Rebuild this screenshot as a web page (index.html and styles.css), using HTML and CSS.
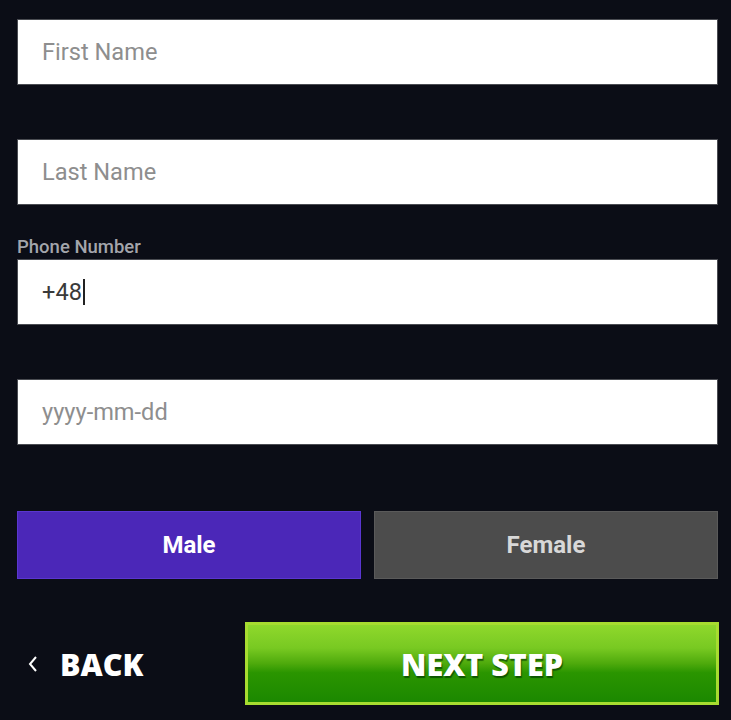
FILE: index.html
```html
<!DOCTYPE html>
<html>
<head>
<meta charset="utf-8">
<link rel="stylesheet" href="styles.css">
</head>
<body>
<div class="form">
  <div class="field">
    <div class="input"><span class="ph">First Name</span></div>
  </div>
  <div class="field">
    <div class="input"><span class="ph">Last Name</span></div>
  </div>
  <div class="field">
    <div class="label">Phone Number</div>
    <div class="input"><span class="val">+48</span><span class="caret"></span></div>
  </div>
  <div class="field">
    <div class="input"><span class="ph">yyyy-mm-dd</span></div>
  </div>
  <div class="gender">
    <div class="gbtn male">Male</div>
    <div class="gbtn female">Female</div>
  </div>
  <div class="actions">
    <div class="back">
      <svg class="chev" width="12" height="18" viewBox="0 0 12 18"><path d="M9 2 L3 9 L9 16" fill="none" stroke="#fff" stroke-width="2"/></svg>
      <span>BACK</span>
    </div>
    <div class="next">NEXT STEP</div>
  </div>
</div>
</body>
</html>
```
FILE: styles.css
```css
html, body {
  margin: 0;
  padding: 0;
  background: #0b0d16;
  height: 100%;
}
body {
  font-family: Roboto, "Liberation Sans", sans-serif;
}
.form {
  padding: 19px 13px 0 17px;
  display: flex;
  flex-direction: column;
}
.field {
  display: flex;
  flex-direction: column;
  height: 66px;
  justify-content: flex-end;
  margin-bottom: 54px;
}
.label {
  color: #a3a5ab;
  font-size: 18.5px;
  font-weight: 500;
  margin-top: -24px;
  height: 24px;
  line-height: 24px;
}
.input {
  box-sizing: border-box;
  height: 66px;
  flex: none;
  background: #fff;
  border: 1px solid #4a4c52;
  display: flex;
  align-items: center;
  padding-left: 24px;
  font-size: 23.6px;
}
.ph { color: #8e8e8e; }
.val { color: #3a3a3a; }
.caret {
  display: inline-block;
  width: 2px;
  height: 26px;
  background: #222;
  margin-left: 1px;
}
.gender {
  display: flex;
  gap: 13px;
  margin-top: 12px;
}
.gbtn {
  flex: 1;
  height: 68px;
  box-sizing: border-box;
  display: flex;
  align-items: center;
  justify-content: center;
  font-size: 24px;
  font-weight: 700;
}
.male {
  background: #4b27b8;
  border: 1px solid #5a36d0;
  color: #fff;
}
.female {
  background: #4c4c4c;
  border: 1px solid #5a5a5a;
  color: #d8d8d8;
}
.actions {
  display: flex;
  align-items: center;
  margin-top: 43px;
}
.back {
  width: 228px;
  display: flex;
  align-items: center;
  padding-left: 10px;
  box-sizing: border-box;
  color: #fff;
  font-family: "Open Sans", Lato, sans-serif;
  font-weight: 800;
  font-size: 30.5px;
}
.chev { margin-right: 21px; }
.next {
  flex: 1;
  height: 83px;
  box-sizing: border-box;
  border: 3px solid #a7dc30;
  background: linear-gradient(to bottom, #8fd82c 0%, #78c922 30%, #4eaa0c 50%, #2a9500 62%, #1c8800 100%);
  display: flex;
  align-items: center;
  justify-content: center;
  color: #fff;
  font-family: "Open Sans", Lato, sans-serif;
  font-weight: 800;
  font-size: 30.5px;
  text-shadow: 1px 2px 1px rgba(0,60,0,0.7);
  margin-right: -1px;
}
```
